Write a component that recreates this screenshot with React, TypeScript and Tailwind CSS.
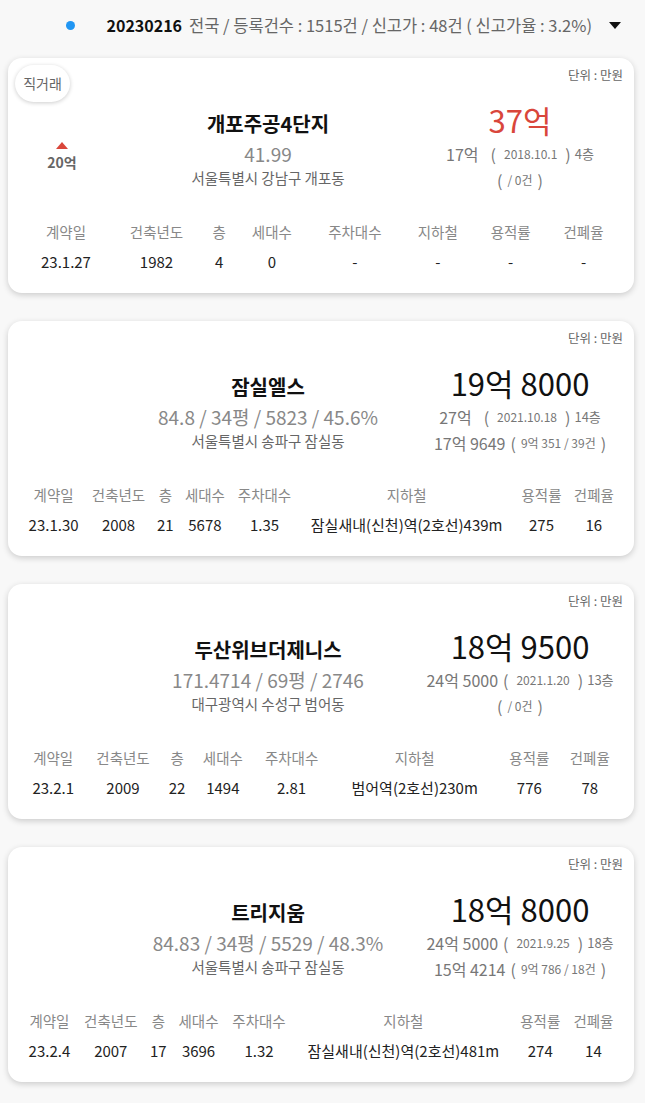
import React from "react";

type Card = {
  badge?: string;
  change?: string;
  title: string;
  sub: string;
  addr: string;
  price: string;
  up?: boolean;
  prev: { amount: string; date: string; floor: string };
  avg: { amount: string; detail: string };
  row: string[];
};

const headers = ["계약일", "건축년도", "층", "세대수", "주차대수", "지하철", "용적률", "건폐율"];

const cards: Card[] = [
  {
    badge: "직거래",
    change: "20억",
    title: "개포주공4단지",
    sub: "41.99",
    addr: "서울특별시 강남구 개포동",
    price: "37억",
    up: true,
    prev: { amount: "17억", date: "2018.10.1", floor: "4층" },
    avg: { amount: "", detail: " / 0건" },
    row: ["23.1.27", "1982", "4", "0", "-", "-", "-", "-"]
  },
  {
    title: "잠실엘스",
    sub: "84.8 / 34평 / 5823 / 45.6%",
    addr: "서울특별시 송파구 잠실동",
    price: "19억 8000",
    prev: { amount: "27억", date: "2021.10.18", floor: "14층" },
    avg: { amount: "17억 9649", detail: "9억 351 / 39건" },
    row: ["23.1.30", "2008", "21", "5678", "1.35", "잠실새내(신천)역(2호선)439m", "275", "16"]
  },
  {
    title: "두산위브더제니스",
    sub: "171.4714 / 69평 / 2746",
    addr: "대구광역시 수성구 범어동",
    price: "18억 9500",
    prev: { amount: "24억 5000", date: "2021.1.20", floor: "13층" },
    avg: { amount: "", detail: " / 0건" },
    row: ["23.2.1", "2009", "22", "1494", "2.81", "범어역(2호선)230m", "776", "78"]
  },
  {
    title: "트리지움",
    sub: "84.83 / 34평 / 5529 / 48.3%",
    addr: "서울특별시 송파구 잠실동",
    price: "18억 8000",
    prev: { amount: "24억 5000", date: "2021.9.25", floor: "18층" },
    avg: { amount: "15억 4214", detail: "9억 786 / 18건" },
    row: ["23.2.4", "2007", "17", "3696", "1.32", "잠실새내(신천)역(2호선)481m", "274", "14"]
  }
];

const DealCard = ({ card }: { card: Card }) => (
  <div className="relative ml-2 mr-[11px] rounded-[14px] bg-white pt-[9px] pb-[16px] shadow-[0_2px_6px_rgba(0,0,0,0.18)]">
    {card.badge && (
      <span className="absolute left-[7px] top-[7px] flex h-[37px] w-[55px] items-center justify-center rounded-full bg-white text-[14px] text-[#666] shadow-[0_1px_4px_rgba(0,0,0,0.2)]">
        {card.badge}
      </span>
    )}
    <div className="pr-[11px] text-right text-[12.5px] leading-4 text-[#666]">단위 : 만원</div>
    <div className="mt-[19px] flex items-start">
      <div className="flex w-[108px] flex-col items-center pt-[40px]">
        {card.change && (
          <>
            <div className="h-0 w-0 border-x-[6px] border-b-[7px] border-x-transparent border-b-[#d9463b]" />
            <span className="mt-[3px] text-[14px] font-semibold leading-5 text-[#666]">{card.change}</span>
          </>
        )}
      </div>
      <div className="flex w-[304px] flex-col items-center pt-[9px]">
        <h2 className="text-[20px] font-bold leading-[26px] text-[#111]">{card.title}</h2>
        <p className="mt-[5px] text-[19px] leading-6 text-[#888]">{card.sub}</p>
        <p className="mt-[2px] text-[14.5px] leading-5 text-[#666]">{card.addr}</p>
      </div>
      <div className="flex flex-1 flex-col items-center whitespace-nowrap pr-[14px]">
        <div className={`text-[31px] leading-9 ${card.up ? "text-[#d9463b]" : "text-[#111]"}`}>
          {card.price}
        </div>
        <div className="mt-[5px] flex items-center text-[16px] leading-[22px] text-[#777]">
          <span>{card.prev.amount}</span>
          <span className={card.prev.amount.length > 4 ? "ml-[5px]" : "ml-[12px]"}>(</span>
          <span className="mx-[8px] text-[12px]">{card.prev.date}</span>
          <span>)</span>
          <span className="ml-[4px] text-[13px]">{card.prev.floor}</span>
        </div>
        <div className="mt-[4px] flex items-center text-[16px] leading-[22px] text-[#777]">
          {card.avg.amount && <span className="mr-[5px]">{card.avg.amount}</span>}
          <span>(</span>
          <span className="mx-[5px] text-[12px]">{card.avg.detail}</span>
          <span>)</span>
        </div>
      </div>
    </div>
    <div className="mt-[26px] px-[14px]">
      <table className="w-full table-auto text-center">
        <thead>
          <tr>
            {headers.map((h) => (
              <th key={h} className="h-[30px] whitespace-nowrap px-[4px] text-[14.5px] font-normal text-[#888]">
                {h}
              </th>
            ))}
          </tr>
        </thead>
        <tbody>
          <tr>
            {card.row.map((v, i) => (
              <td key={i} className="h-[30px] whitespace-nowrap px-[4px] text-[15px] text-[#222]">
                {v}
              </td>
            ))}
          </tr>
        </tbody>
      </table>
    </div>
  </div>
);

export default function App() {
  return (
    <div className="min-h-[1103px] w-[645px] bg-[#f8f8f8] font-['Noto_Sans_CJK_KR',sans-serif]">
      <div className="flex h-[50px] items-center justify-end pr-[24px]">
        <span className="mr-[32px] h-[9px] w-[9px] rounded-full bg-[#2196f3]" />
        <span className="text-[16px] font-bold text-[#111]">20230216</span>
        <span className="ml-[7px] text-[16.5px] text-[#666]">전국 / 등록건수 : 1515건 / 신고가 : 48건 ( 신고가율 : 3.2%)</span>
        <span className="ml-[17px] h-0 w-0 border-x-[6px] border-t-[7px] border-x-transparent border-t-[#111]" />
      </div>
      <div className="flex flex-col gap-[28px] pt-[8px] pb-[20px]">
        {cards.map((c) => (
          <DealCard key={c.title} card={c} />
        ))}
      </div>
    </div>
  );
}
